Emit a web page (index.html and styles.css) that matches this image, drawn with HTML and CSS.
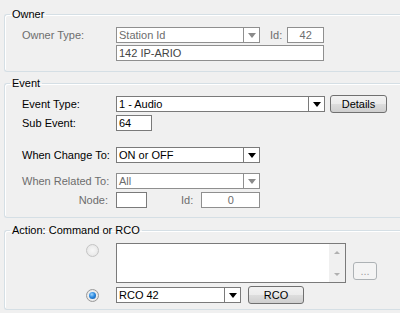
FILE: index.html
```html
<!DOCTYPE html>
<html>
<head>
    <title>Event Action</title>
    <link rel="stylesheet" href="styles.css">
</head>
<body>
    <fieldset class="group owner">
        <legend>Owner</legend>
        <div class="row">
            <label class="lbl off">Owner Type:</label>
            <div class="combo off w144"><span class="val">Station Id</span><span class="drop"><i class="arrow"></i></span></div>
            <label class="lbl-small off">Id:</label>
            <div class="box off w37 center">42</div>
        </div>
        <div class="row row2">
            <div class="box ro w208">142 IP-ARIO</div>
        </div>
    </fieldset>

    <fieldset class="group event">
        <legend>Event</legend>
        <div class="row">
            <label class="lbl">Event Type:</label>
            <div class="combo w209"><span class="val">1 - Audio</span><span class="drop"><i class="arrow"></i></span></div>
            <button class="btn btn-details">Details</button>
        </div>
        <div class="row sub">
            <label class="lbl">Sub Event:</label>
            <div class="box w36">64</div>
        </div>
        <div class="row change">
            <label class="lbl">When Change To:</label>
            <div class="combo w144"><span class="val">ON or OFF</span><span class="drop"><i class="arrow"></i></span></div>
        </div>
        <div class="row related">
            <label class="lbl off">When Related To:</label>
            <div class="combo off w144"><span class="val">All</span><span class="drop"><i class="arrow"></i></span></div>
        </div>
        <div class="row node">
            <label class="lbl off right">Node:</label>
            <div class="box w31"></div>
            <label class="lbl-id off">Id:</label>
            <div class="box off w59 center">0</div>
        </div>
    </fieldset>

    <fieldset class="group action">
        <legend>Action: Command or RCO</legend>
        <div class="row cmd">
            <div class="radio-cell"><span class="radio off"></span></div>
            <div class="memo">
                <div class="scroll">
                    <i class="up"></i>
                    <i class="down"></i>
                </div>
            </div>
            <button class="btn btn-more" disabled>...</button>
        </div>
        <div class="row rco">
            <div class="radio-cell"><span class="radio on"></span></div>
            <div class="combo w125"><span class="val">RCO 42</span><span class="drop"><i class="arrow"></i></span></div>
            <button class="btn btn-rco">RCO</button>
        </div>
    </fieldset>
</body>
</html>
```

FILE: styles.css
```css
body {
    margin: 0;
    padding-top: 8px;
    background: #f0f0f0;
    font-family: "Liberation Sans", Arial, sans-serif;
    font-size: 11px;
    color: #000;
    overflow: hidden;
}

/* group boxes run off the right edge of the window */
.group {
    margin: 0 0 0 4px;
    padding: 0 0 0 17px;
    border: 1px solid #d5dfe5;
    border-right: none;
    border-radius: 3px 0 0 3px;
    box-shadow: inset 1px 1px 0 #fff;
    min-width: 0;
}
.group legend {
    margin-left: -12px;
    padding: 0 2px;
    line-height: 12px;
    height: 12px;
}

.owner { padding-top: 7px; padding-bottom: 10px; }
.event { margin-top: 5px; padding-top: 7px; padding-bottom: 9px; }
.action { margin-top: 6px; padding-top: 7px; padding-bottom: 6px; }

.row {
    display: flex;
    align-items: center;
    height: 16px;
}
.row2 { margin-top: 2px; padding-left: 94px; }
.sub { margin-top: 3px; }
.change { margin-top: 16px; }
.related { margin-top: 10px; }
.node { margin-top: 3px; }

.lbl {
    width: 94px;
    flex: none;
    white-space: nowrap;
}
.lbl.right {
    text-align: right;
    padding-right: 8px;
    box-sizing: border-box;
}
.lbl-small { margin: 0 5px 0 10px; }
.lbl-id { margin: 0 8px 0 34px; }
.off { color: #6d6d6d; }

/* text boxes */
.box {
    height: 16px;
    box-sizing: border-box;
    border: 1px solid #7a7a7a;
    background: #fff;
    line-height: 14px;
    padding: 0 2px;
    white-space: nowrap;
    flex: none;
}
.box.off { border-color: #8f8f8f; }
.box.ro { color: #444; border-color: #8f8f8f; }
.center { text-align: center; }

.w31 { width: 31px; }
.w36 { width: 36px; }
.w37 { width: 37px; }
.w59 { width: 59px; }
.w125 { width: 125px; }
.w144 { width: 144px; }
.w208 { width: 208px; }
.w209 { width: 209px; }

/* combo boxes */
.combo {
    display: flex;
    height: 16px;
    box-sizing: border-box;
    border: 1px solid #7a7a7a;
    background: #fff;
    flex: none;
}
.combo.off { border-color: #8f8f8f; }
.combo .val {
    flex: 1;
    line-height: 14px;
    padding-left: 2px;
    white-space: nowrap;
}
.combo .drop {
    width: 15px;
    border-left: 1px solid #7a7a7a;
    display: flex;
    align-items: center;
    justify-content: center;
}
.combo.off .drop { border-left-color: #8f8f8f; }
.arrow {
    width: 0;
    height: 0;
    border-left: 4px solid transparent;
    border-right: 4px solid transparent;
    border-top: 5px solid #000;
    margin-top: 1px;
}
.combo.off .arrow { border-top-color: #8a8a8a; }

/* buttons */
.btn {
    font-family: inherit;
    font-size: 11px;
    height: 18px;
    padding: 0;
    border: 1px solid #707070;
    border-radius: 3px;
    background: linear-gradient(#f2f2f2 0%, #ebebeb 50%, #dddddd 51%, #cfcfcf 100%);
    color: #000;
    flex: none;
}
.btn-details { width: 57px; margin-left: 5px; }
.btn-rco { width: 56px; margin-left: 7px; }
.btn-more {
    width: 24px;
    margin: 19px 0 0 7px;
    border-color: #adb2b5;
    background: #f4f4f4;
    color: #a0a0a0;
    line-height: 12px;
    align-self: flex-start;
}

/* action group */
.cmd {
    height: 40px;
    align-items: flex-start;
}
.rco { margin-top: 4px; }
.radio-cell {
    width: 94px;
    flex: none;
    display: flex;
    justify-content: flex-end;
    padding-right: 17px;
    box-sizing: border-box;
}
.cmd .radio-cell { padding-top: 1px; }
.radio {
    width: 13px;
    height: 13px;
    box-sizing: border-box;
    border-radius: 50%;
    border: 1px solid #9a9a9a;
    background: radial-gradient(circle at 50% 50%, #ffffff 0%, #f4f4f4 40%, #d8d8d8 100%);
    position: relative;
}
.radio.off {
    border-color: #c4c4c4;
    background: radial-gradient(circle at 50% 50%, #f7f7f7 0%, #eeeeee 50%, #dedede 100%);
}
.radio.on::after {
    content: "";
    position: absolute;
    left: 2px;
    top: 2px;
    width: 7px;
    height: 7px;
    border-radius: 50%;
    background: radial-gradient(circle at 40% 35%, #9fd6ff 0%, #2e8be0 45%, #0f4f9c 100%);
}

.memo {
    width: 230px;
    height: 40px;
    box-sizing: border-box;
    border: 1px solid #7a7a7a;
    background: #fff;
    display: flex;
    justify-content: flex-end;
    flex: none;
}
.scroll {
    width: 16px;
    background: #f0f0f0;
    display: flex;
    flex-direction: column;
    justify-content: space-between;
    align-items: center;
    padding: 7px 0 6px;
    box-sizing: border-box;
}
.scroll .up {
    width: 0;
    height: 0;
    border-left: 3px solid transparent;
    border-right: 3px solid transparent;
    border-bottom: 3px solid #b0b0b0;
}
.scroll .down {
    width: 0;
    height: 0;
    border-left: 3px solid transparent;
    border-right: 3px solid transparent;
    border-top: 3px solid #b0b0b0;
}
```
